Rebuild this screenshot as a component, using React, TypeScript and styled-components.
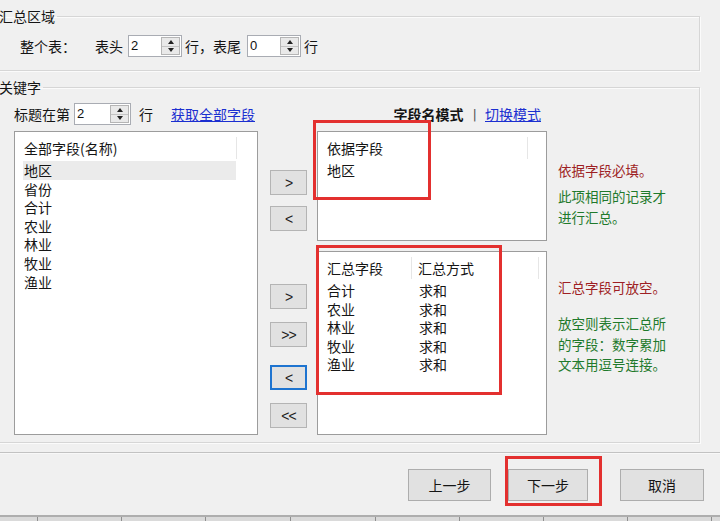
import React from "react";
import styled, { createGlobalStyle } from "styled-components";

const GlobalStyle = createGlobalStyle`
  html, body {
    margin: 0;
    padding: 0;
    background: #f0f0f0;
  }
  body {
    font-family: "Noto Sans CJK SC", "Noto Sans", sans-serif;
    font-size: 14px;
    color: #151515;
  }
`;

const allFields = ["地区", "省份", "合计", "农业", "林业", "牧业", "渔业"];
const sumFields = ["合计", "农业", "林业", "牧业", "渔业"];

const App: React.FC = () => {
  return (
    <Window>
      <GlobalStyle />

      <Group $top={6}>
        <Legend>汇总区域</Legend>
        <Row $pl={23} $pt={9} $pb={13}>
          <Text>整个表：</Text>
          <Text $ml={19}>表头</Text>
          <Spinner value="2" ml={5} width={54} />
          <Text $ml={3}>行，表尾</Text>
          <Spinner value="0" ml={6} width={54} />
          <Text $ml={3}>行</Text>
        </Row>
      </Group>

      <Group $top={6}>
        <Legend>关键字</Legend>
        <KeyGrid>
          <Row>
            <Text>标题在第</Text>
            <Spinner value="2" ml={4} width={57} />
            <Text $ml={8}>行</Text>
            <Link $ml={18}>获取全部字段</Link>
          </Row>
          <span />
          <ModeRow>
            <Bold>字段名模式</Bold>
            <Bar>|</Bar>
            <Link>切换模式</Link>
          </ModeRow>
          <span />

          <ListBox $height={304}>
            <ListHeader>
              <Cell $width={214} $sep>全部字段(名称)</Cell>
            </ListHeader>
            {allFields.map((f, i) => (
              <ListRow key={f} $selected={i === 0}>
                <Cell $width={213}>{f}</Cell>
              </ListRow>
            ))}
          </ListBox>

          <Mover>
            <MoveButton $mt={39}>&gt;</MoveButton>
            <MoveButton $mt={11}>&lt;</MoveButton>
            <MoveButton $mt={53}>&gt;</MoveButton>
            <MoveButton $mt={13}>&gt;&gt;</MoveButton>
            <MoveButton $mt={18} $focused>&lt;</MoveButton>
            <MoveButton $mt={13}>&lt;&lt;</MoveButton>
          </Mover>

          <RightLists>
            <ListBox $height={110}>
              <ListHeader>
                <Cell $width={202} $sep>依据字段</Cell>
              </ListHeader>
              <ListRow>
                <Cell>地区</Cell>
              </ListRow>
            </ListBox>
            <ListBox $height={184}>
              <ListHeader>
                <Cell $width={86} $sep>汇总字段</Cell>
                <Cell $width={127} $pad={6} $sep>汇总方式</Cell>
              </ListHeader>
              {sumFields.map((f) => (
                <ListRow key={f}>
                  <Cell $width={86}>{f}</Cell>
                  <Cell $pad={7}>求和</Cell>
                </ListRow>
              ))}
            </ListBox>
          </RightLists>

          <Hints>
            <HintBlock $height={120} $pt={29}>
              <Warn>依据字段必填。</Warn>
              <Note $mt={6} $lh={21}>
                此项相同的记录才
                <br />
                进行汇总。
              </Note>
            </HintBlock>
            <HintBlock $height={184} $pt={26}>
              <Warn>汇总字段可放空。</Warn>
              <Note $mt={16} $lh={20.5}>
                放空则表示汇总所
                <br />
                的字段：数字累加
                <br />
                文本用逗号连接。
              </Note>
            </HintBlock>
          </Hints>
        </KeyGrid>
      </Group>

      <Separator />

      <Footer>
        <DialogButton>上一步</DialogButton>
        <DialogButton $ml={17} $width={80}>下一步</DialogButton>
        <DialogButton $ml={32} $width={84}>取消</DialogButton>
      </Footer>

      <SheetStrip>
        {[37, 83, 83, 84, 84, 83, 83, 83, 83].map((w, i) => (
          <SheetCell key={i} $width={w} />
        ))}
      </SheetStrip>

      <Annot $x={313} $y={120} $w={118} $h={80} />
      <Annot $x={316} $y={245} $w={186} $h={150} />
      <Annot $x={505} $y={456} $w={97} $h={50} />
    </Window>
  );
};

type SpinnerProps = { value: string; ml: number; width: number };

const Spinner: React.FC<SpinnerProps> = ({ value, ml, width }) => (
  <SpinBox $ml={ml} $width={width}>
    <SpinValue>{value}</SpinValue>
    <SpinArrows>
      <SpinHalf>
        <ArrowUp />
      </SpinHalf>
      <SpinHalf $bottom>
        <ArrowDown />
      </SpinHalf>
    </SpinArrows>
  </SpinBox>
);

const Window = styled.div`
  position: relative;
  width: 720px;
  height: 521px;
  overflow: hidden;
  background: #f0f0f0;
  display: flex;
  flex-direction: column;
`;

const Group = styled.fieldset<{ $top: number }>`
  margin: ${(p) => p.$top}px 0 0 -10px;
  width: 710px;
  box-sizing: border-box;
  padding: 0 0 0 6px;
  border: 1px solid #d6d6d6;
  box-shadow: inset 1px 1px 0 #fbfbfb, 1px 1px 0 #fbfbfb;
  min-width: 0;
`;

const Legend = styled.legend`
  padding: 0 2px;
  font-size: 14px;
  line-height: 20px;
  color: #151515;
`;

const Row = styled.div<{ $pl?: number; $pt?: number; $pb?: number }>`
  display: flex;
  align-items: center;
  height: 22px;
  padding: ${(p) => p.$pt ?? 0}px 0 ${(p) => p.$pb ?? 0}px ${(p) => p.$pl ?? 0}px;
`;

const Text = styled.span<{ $ml?: number }>`
  margin-left: ${(p) => p.$ml ?? 0}px;
  white-space: nowrap;
  line-height: 20px;
`;

const Link = styled.span<{ $ml?: number }>`
  margin-left: ${(p) => p.$ml ?? 0}px;
  color: #1b2fd0;
  text-decoration: underline;
  white-space: nowrap;
`;

const Bold = styled.span`
  font-weight: 700;
  white-space: nowrap;
`;

const Bar = styled.span`
  margin: 0 8px 0 9px;
  color: #555;
  font-family: "DejaVu Sans", sans-serif;
  font-size: 13px;
`;

const SpinBox = styled.div<{ $ml: number; $width: number }>`
  margin-left: ${(p) => p.$ml}px;
  width: ${(p) => p.$width}px;
  height: 22px;
  box-sizing: border-box;
  display: flex;
  background: #fff;
  border: 1px solid #a9acb3;
`;

const SpinValue = styled.span`
  flex: 1;
  padding-left: 2px;
  font-family: "Liberation Sans", sans-serif;
  font-size: 13px;
  line-height: 19px;
  color: #111;
`;

const SpinArrows = styled.div`
  width: 17px;
  margin: 1px 1px 1px 0;
  display: flex;
  flex-direction: column;
  border: 1px solid #b5b5b5;
  background: #e9e9e9;
`;

const SpinHalf = styled.div<{ $bottom?: boolean }>`
  flex: 1;
  display: flex;
  align-items: center;
  justify-content: center;
  border-top: ${(p) => (p.$bottom ? "1px solid #c4c4c4" : "none")};
`;

const ArrowUp = styled.span`
  width: 0;
  height: 0;
  border-left: 3.5px solid transparent;
  border-right: 3.5px solid transparent;
  border-bottom: 4px solid #222;
`;

const ArrowDown = styled.span`
  width: 0;
  height: 0;
  border-left: 3.5px solid transparent;
  border-right: 3.5px solid transparent;
  border-top: 4px solid #222;
`;

const KeyGrid = styled.div`
  display: grid;
  grid-template-columns: 244px 59px 230px 1fr;
  grid-template-rows: 22px auto;
  row-gap: 6px;
  padding: 6px 0 7px 17px;
`;

const ModeRow = styled.div`
  display: flex;
  align-items: center;
  justify-content: flex-end;
  padding-right: 6px;
`;

const ListBox = styled.div<{ $height: number }>`
  height: ${(p) => p.$height}px;
  box-sizing: border-box;
  background: #fff;
  border: 1px solid #9c9c9c;
  padding: 5px 0 0 8px;
  overflow: hidden;
`;

const ListHeader = styled.div`
  display: flex;
  height: 22px;
  line-height: 22px;
  margin-bottom: 2px;
`;

const ListRow = styled.div<{ $selected?: boolean }>`
  display: flex;
  width: ${(p) => (p.$selected ? "213px" : "auto")};
  height: 18.6px;
  line-height: 18.6px;
  background: ${(p) => (p.$selected ? "#ebebeb" : "transparent")};
`;

const Cell = styled.div<{ $width?: number; $pad?: number; $sep?: boolean }>`
  width: ${(p) => (p.$width ? `${p.$width}px` : "auto")};
  flex: ${(p) => (p.$width ? "none" : "1")};
  box-sizing: border-box;
  padding-left: ${(p) => p.$pad ?? 1}px;
  border-right: ${(p) => (p.$sep ? "1px solid #e6e6e6" : "none")};
  white-space: nowrap;
`;

const Mover = styled.div`
  display: flex;
  flex-direction: column;
  align-items: flex-start;
  padding-left: 12px;
`;

const MoveButton = styled.button<{ $mt: number; $focused?: boolean }>`
  margin-top: ${(p) => p.$mt}px;
  width: 37px;
  height: 25px;
  box-sizing: border-box;
  padding: 0;
  background: #e1e1e1;
  border: ${(p) => (p.$focused ? "2px solid #1e74d0" : "1px solid #b4b4b4")};
  font-family: "Liberation Sans", sans-serif;
  font-size: 14px;
  letter-spacing: -1px;
  color: #222;
`;

const RightLists = styled.div`
  display: flex;
  flex-direction: column;
  gap: 10px;
`;

const Hints = styled.div`
  display: flex;
  flex-direction: column;
  padding-left: 11px;
`;

const HintBlock = styled.div<{ $height: number; $pt: number }>`
  height: ${(p) => p.$height}px;
  box-sizing: border-box;
  padding-top: ${(p) => p.$pt}px;
  font-size: 13.5px;
`;

const Warn = styled.div`
  color: #9e1f24;
  line-height: 20px;
  white-space: nowrap;
`;

const Note = styled.div<{ $mt: number; $lh: number }>`
  margin-top: ${(p) => p.$mt}px;
  color: #1f7a2c;
  line-height: ${(p) => p.$lh}px;
  white-space: nowrap;
`;

const Separator = styled.div`
  margin-top: 9px;
  height: 1px;
  background: #c2c2c2;
  border-bottom: 1px solid #f8f8f8;
`;

const Footer = styled.div`
  height: 61px;
  box-sizing: border-box;
  display: flex;
  justify-content: flex-end;
  align-items: flex-start;
  padding: 15px 16px 0 0;
`;

const DialogButton = styled.button<{ $ml?: number; $width?: number }>`
  margin-left: ${(p) => p.$ml ?? 0}px;
  width: ${(p) => p.$width ?? 83}px;
  height: 32px;
  box-sizing: border-box;
  background: #e1e1e1;
  border: 1px solid #adadad;
  font-family: "Noto Sans CJK SC", sans-serif;
  font-size: 14px;
  color: #151515;
`;

const SheetStrip = styled.div`
  flex: 1;
  display: flex;
  background: #dadada;
  border-top: 2px solid #aeaeae;
`;

const SheetCell = styled.div<{ $width: number }>`
  width: ${(p) => p.$width}px;
  flex: none;
  border-right: 1px solid #8f8f8f;
`;

const Annot = styled.div<{ $x: number; $y: number; $w: number; $h: number }>`
  position: absolute;
  left: ${(p) => p.$x}px;
  top: ${(p) => p.$y}px;
  width: ${(p) => p.$w}px;
  height: ${(p) => p.$h}px;
  box-sizing: border-box;
  border: 3px solid #e3302f;
  pointer-events: none;
`;

export default App;
